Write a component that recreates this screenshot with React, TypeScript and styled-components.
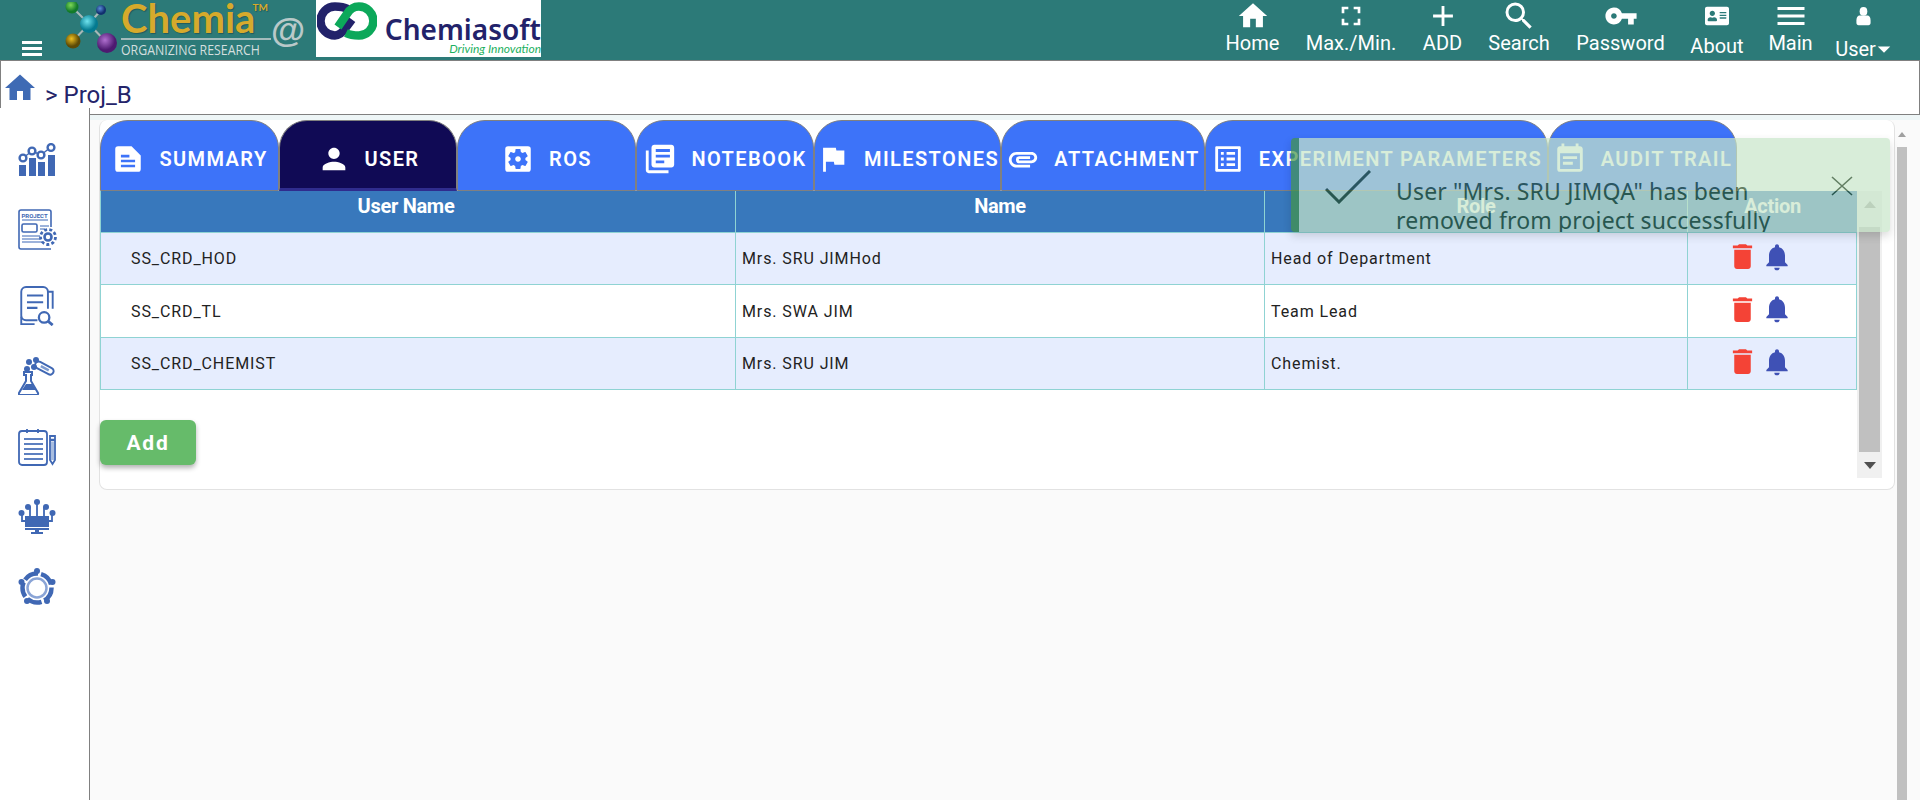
import React from 'react';
import styled, { createGlobalStyle } from 'styled-components';
import {
  MdHome, MdFullscreen, MdAdd, MdSearch, MdVpnKey, MdMenu, MdPerson,
  MdSettingsApplications, MdLibraryBooks, MdFlag, MdAttachment, MdListAlt, MdEventNote,
  MdDelete, MdNotifications, MdArrowDropDown,
} from 'react-icons/md';
import { FaAddressCard } from 'react-icons/fa';

const GlobalStyle = createGlobalStyle`
  html, body { margin: 0; height: 800px; overflow: hidden; background: #fafafa; }
  * { box-sizing: border-box; }
  body { font-family: Roboto, "Liberation Sans", sans-serif; }
`;

const SummaryGlyph = () => (
  <svg width="34" height="34" viewBox="0 0 24 24" fill="#fff" fillRule="evenodd">
    <path d="M14.500 3H5a2 2 0 0 0-2 2v14a2 2 0 0 0 2 2h14a2 2 0 0 0 2-2V9.500zM7 9h6v2H7zM7 12.500h10v1.800H7zM7 16h10v1.800H7z" />
  </svg>
);

const NAV = [
  { label: 'Home', icon: <MdHome size={34} />, width: 79 },
  { label: 'Max./Min.', icon: <MdFullscreen size={32} />, width: 118 },
  { label: 'ADD', icon: <MdAdd size={34} />, width: 65 },
  { label: 'Search', icon: <MdSearch size={36} />, width: 88 },
  { label: 'Password', icon: <MdVpnKey size={34} />, width: 115 },
  { label: 'About', icon: <FaAddressCard size={24} />, width: 78, low: true },
  { label: 'Main', icon: <MdMenu size={36} />, width: 69 },
];

const TABS = [
  { label: 'SUMMARY', icon: <SummaryGlyph />, width: 179 },
  { label: 'USER', icon: <MdPerson size={34} />, width: 178, active: true },
  { label: 'ROS', icon: <MdSettingsApplications size={34} />, width: 179 },
  { label: 'NOTEBOOK', icon: <MdLibraryBooks size={34} />, width: 178 },
  { label: 'MILESTONES', icon: <MdFlag size={34} />, width: 187 },
  { label: 'ATTACHMENT', icon: <MdAttachment size={34} />, width: 204 },
  { label: 'EXPERIMENT PARAMETERS', icon: <MdListAlt size={34} />, width: 343 },
  { label: 'AUDIT TRAIL', icon: <MdEventNote size={34} />, width: 189 },
];

const USERS = [
  { userName: 'SS_CRD_HOD', name: 'Mrs. SRU JIMHod', role: 'Head of Department', height: 52 },
  { userName: 'SS_CRD_TL', name: 'Mrs. SWA JIM', role: 'Team Lead', height: 53 },
  { userName: 'SS_CRD_CHEMIST', name: 'Mrs. SRU JIM', role: 'Chemist.', height: 53 },
];

const COLUMNS = '634px 529px 423px 1fr';

const BurgerGlyph = () => (
  <svg width="20" height="15" viewBox="0 0 20 15" fill="#fff">
    <rect y="0" width="20" height="3" />
    <rect y="6" width="20" height="3" />
    <rect y="12" width="20" height="3" />
  </svg>
);

const UserGlyph = () => (
  <svg width="15" height="20" viewBox="0 0 18 24" fill="#fff" preserveAspectRatio="none">
    <ellipse cx="9" cy="6.500" rx="4.600" ry="5.200" />
    <path d="M3.500 11.500h11c2 1 3 3 3 6v3c0 1.500-1 2.500-2.500 2.500H3c-1.500 0-2.500-1-2.500-2.500v-3c0-3 1-5 3-6z" />
  </svg>
);

const ChemiaMolecule = () => (
  <svg width="54" height="54" viewBox="0 0 54 54">
    <defs>
      <radialGradient id="mTeal" cx="40%" cy="35%"><stop offset="0%" stopColor="#6fe3ee" /><stop offset="100%" stopColor="#047a90" /></radialGradient>
      <radialGradient id="mGreen" cx="40%" cy="35%"><stop offset="0%" stopColor="#7ed957" /><stop offset="100%" stopColor="#127a2a" /></radialGradient>
      <radialGradient id="mBlue" cx="40%" cy="35%"><stop offset="0%" stopColor="#5a8fd8" /><stop offset="100%" stopColor="#12306f" /></radialGradient>
      <radialGradient id="mGold" cx="40%" cy="35%"><stop offset="0%" stopColor="#f0c020" /><stop offset="100%" stopColor="#5d4a05" /></radialGradient>
      <radialGradient id="mPurple" cx="40%" cy="35%"><stop offset="0%" stopColor="#b070d0" /><stop offset="100%" stopColor="#4d1a70" /></radialGradient>
    </defs>
    <g stroke="#a8b8b8" strokeWidth="2">
      <line x1="8" y1="5" x2="25" y2="22" />
      <line x1="37" y1="8" x2="25" y2="22" />
      <line x1="9" y1="39" x2="25" y2="22" />
      <line x1="43" y1="41" x2="25" y2="22" />
    </g>
    <circle cx="8" cy="5" r="6.500" fill="url(#mGreen)" />
    <circle cx="37" cy="8" r="5" fill="url(#mBlue)" />
    <circle cx="25" cy="22" r="9" fill="url(#mTeal)" />
    <circle cx="9" cy="39" r="7.500" fill="url(#mGold)" />
    <circle cx="43" cy="41" r="10" fill="url(#mPurple)" />
  </svg>
);

const ChainMark = () => (
  <svg width="60" height="38" viewBox="0 0 60 38" fill="none" strokeWidth="8.500">
    <path d="M31 7C27 5 23 4.500 18 4.500a14.500 14.500 0 1 0 0 29c6 0 9-5 11-8l6-8" stroke="#22226a" />
    <path d="M21 25l9-13c3-5 7-7.500 12-7.500a14.500 14.500 0 1 1 0 29c-5 0-9-.5-13-2.500" stroke="#0ca85a" />
  </svg>
);

const ChartIcon = () => (
  <svg width="38" height="33" viewBox="0 0 38 33" fill="#4068b4">
    <rect x="1" y="22" width="7" height="11" />
    <rect x="11" y="15" width="7" height="18" />
    <rect x="20" y="19" width="7" height="14" />
    <rect x="30" y="12" width="7" height="21" />
    <path d="M5 15L14 8l9 4 10-8" stroke="#4068b4" strokeWidth="1.500" fill="none" />
    <g fill="#fff" stroke="#4068b4" strokeWidth="2.400">
      <circle cx="5" cy="15" r="3.400" /><circle cx="14" cy="8" r="3.400" /><circle cx="23" cy="12" r="3.400" /><circle cx="33" cy="4.500" r="3.400" />
    </g>
  </svg>
);

const ProjectIcon = () => (
  <svg width="39" height="42" viewBox="0 0 39 42" fill="none" stroke="#4068b4">
    <path d="M33 18V3a2 2 0 0 0-2-2H3a2 2 0 0 0-2 2v35a2 2 0 0 0 2 2h30" strokeWidth="1.600" />
    <rect x="4" y="15" width="15" height="8" rx="1.500" strokeWidth="1.600" />
    <path d="M4 11h26M22 17h9M22 20h5M4 27h18M4 30h18M4 33h20" strokeWidth="1.600" stroke="#7d9bd0" />
    <text x="3.500" y="8.500" fontFamily="Roboto, sans-serif" fontSize="6" fontWeight="700" fill="#4068b4" stroke="none">PROJECT</text>
    <circle cx="30" cy="28" r="3.500" strokeWidth="2.600" />
    <circle cx="30" cy="28" r="7.500" strokeWidth="2.800" strokeDasharray="3 2.200" />
  </svg>
);

const SearchDocIcon = () => (
  <svg width="37" height="40" viewBox="0 0 38 42" fill="none" stroke="#4068b4" strokeWidth="2">
    <path d="M20 36H8a5 5 0 0 1-5-5V6a5 5 0 0 1 5-5h18a5 5 0 0 1 5 5v18" />
    <path d="M31 6h5v18M3 32v8h14" />
    <path d="M9 10h17M9 17h17M9 23h11" strokeWidth="2.200" />
    <circle cx="27" cy="33" r="5.500" strokeWidth="2.400" />
    <path d="M31 37l5 4" strokeWidth="3" />
  </svg>
);

const FlaskIcon = () => (
  <svg width="38" height="38" viewBox="0 0 38 38" fill="#4068b4">
    <path d="M6 15h8v3h-1v6l7 12c.4 1-.2 2-1 2H2c-1 0-1.400-1-1-2l7-12v-6H6z" fill="none" stroke="#4068b4" strokeWidth="2" />
    <path d="M4 33l4-6h6l4 6z" />
    <circle cx="11" cy="5" r="3" /><circle cx="18" cy="3" r="3" /><circle cx="9" cy="12" r="3" /><circle cx="16" cy="10" r="3" />
    <g transform="rotate(28 27 12)" fill="none" stroke="#4068b4" strokeWidth="2">
      <rect x="16" y="8" width="20" height="7" rx="3.500" />
      <path d="M22 11.500h9" strokeWidth="2.500" stroke="#7d9bd0" />
    </g>
  </svg>
);

const NotepadIcon = () => (
  <svg width="38" height="38" viewBox="0 0 38 38" fill="none" stroke="#4068b4" strokeWidth="1.800">
    <rect x="1" y="3" width="28" height="34" rx="3" />
    <path d="M9 1v4M20 1v4" />
    <path d="M6 11h19M6 16h19M6 21h19M6 26h19M6 31h19" strokeWidth="2" stroke="#5d80c0" />
    <path d="M32 8h5v24l-2.500 4-2.500-4z" />
    <path d="M32 12h5" strokeWidth="2.500" />
    <path d="M34.500 14v18" strokeWidth="3" stroke="#a8bde0" />
  </svg>
);

const NetworkIcon = () => (
  <svg width="38" height="36" viewBox="0 0 38 36" fill="#4068b4">
    <rect x="7" y="17" width="24" height="11" />
    <path d="M7 29h24v2H7zM17 31h4v2h4v2H13v-2h4z" />
    <g stroke="#4068b4" strokeWidth="1.800" fill="none">
      <path d="M19 17V4M12 17V9h-2v-1M26 17V9h2v-1M7 22H4v-6M31 22h3v-6" />
    </g>
    <circle cx="19" cy="3" r="3" /><circle cx="10" cy="8" r="3" /><circle cx="28" cy="8" r="3" /><circle cx="3.500" cy="14" r="3" /><circle cx="34.500" cy="14" r="3" />
  </svg>
);

const CircleNetIcon = () => (
  <svg width="38" height="38" viewBox="0 0 38 38">
    <circle cx="19" cy="20" r="14.500" fill="none" stroke="#4068b4" strokeWidth="4.500" strokeDasharray="15 3" />
    <circle cx="19" cy="20" r="9.500" fill="#fff" stroke="#8aa4d6" strokeWidth="2.500" />
    <g fill="#4068b4">
      <circle cx="19" cy="3" r="3" /><circle cx="34.500" cy="14" r="3" /><circle cx="29" cy="33" r="3" /><circle cx="9" cy="33" r="3" /><circle cx="3.500" cy="14" r="3" />
    </g>
  </svg>
);

const SIDE_ICONS = [
  { icon: <ChartIcon />, height: 33, gap: 33 },
  { icon: <ProjectIcon />, height: 42, gap: 35 },
  { icon: <SearchDocIcon />, height: 40, gap: 31 },
  { icon: <FlaskIcon />, height: 38, gap: 33 },
  { icon: <NotepadIcon />, height: 38, gap: 33 },
  { icon: <NetworkIcon />, height: 36, gap: 33 },
  { icon: <CircleNetIcon />, height: 38, gap: 0 },
];

const App = () => (
  <>
    <GlobalStyle />
    <Page>
      <Header>
        <Burger><BurgerGlyph /></Burger>
        <ChemiaLogo>
          <ChemiaMolecule />
          <ChemiaWords>
            <ChemiaName>Chemia<Tm>TM</Tm></ChemiaName>
            <ChemiaTag>ORGANIZING RESEARCH</ChemiaTag>
          </ChemiaWords>
          <AtSign>@</AtSign>
        </ChemiaLogo>
        <SoftLogo>
          <ChainMark />
          <SoftWords>
            <SoftName>Chemiasoft</SoftName>
            <SoftTag>Driving Innovation</SoftTag>
          </SoftWords>
        </SoftLogo>
        <Nav>
          {NAV.map((n) => (
            <NavItem key={n.label} $width={n.width}>
              <NavIcon>{n.icon}</NavIcon>
              <NavLabel $low={n.low}>{n.label}</NavLabel>
            </NavItem>
          ))}
          <NavItem $width={77}>
            <NavIcon><UserGlyph /></NavIcon>
            <NavLabel $low>User<Caret><MdArrowDropDown size={30} /></Caret></NavLabel>
          </NavItem>
        </Nav>
      </Header>

      <Crumb>
        <CrumbHome><MdHome size={36} /></CrumbHome>
        <CrumbText>&gt; Proj_B</CrumbText>
      </Crumb>

      <Body>
        <Sidebar>
          {SIDE_ICONS.map((s, i) => (
            <SideIcon key={i} $height={s.height} $gap={s.gap}>{s.icon}</SideIcon>
          ))}
        </Sidebar>

        <Main>
          <TopStrip />
          <Content>
            <Card>
              <CardInner>
                <Tabs>
                  {TABS.map((t) => (
                    <Tab key={t.label} $width={t.width} $active={t.active}>
                      {t.icon}
                      <TabLabel>{t.label}</TabLabel>
                    </Tab>
                  ))}
                </Tabs>
                <Table>
                  <HeadRow>
                    <HeadCell $shift={24}>User Name</HeadCell>
                    <HeadCell>Name</HeadCell>
                    <HeadCell>Role</HeadCell>
                    <HeadCell>Action</HeadCell>
                  </HeadRow>
                  {USERS.map((u, i) => (
                    <Row key={u.userName} $odd={i % 2 === 0} $height={u.height}>
                      <Cell $pad={30}>{u.userName}</Cell>
                      <Cell>{u.name}</Cell>
                      <Cell>{u.role}</Cell>
                      <ActionCell>
                        <MdDelete size={33} color="#f44336" />
                        <MdNotifications size={32} color="#3f51b5" />
                      </ActionCell>
                    </Row>
                  ))}
                </Table>
                <AddButton>Add</AddButton>
              </CardInner>
              <InnerScroll>
                <ArrowUp />
                <InnerThumb />
                <ArrowDown />
              </InnerScroll>
            </Card>
            <PageScroll>
              <PageArrow />
              <PageThumb />
            </PageScroll>
          </Content>
        </Main>
      </Body>

      <Toast>
        <CheckWrap>
          <svg width="46" height="34" viewBox="0 0 46 34" fill="none" stroke="#224a23" strokeWidth="3">
            <path d="M1 19l13 13L45 1" />
          </svg>
        </CheckWrap>
        <ToastText>User "Mrs. SRU JIMQA" has been removed from project successfully</ToastText>
        <ToastClose>
          <svg width="22" height="20" viewBox="0 0 22 20" fill="none" stroke="#224a23" strokeWidth="1.600">
            <path d="M1 1l20 18M21 1L1 19" />
          </svg>
        </ToastClose>
      </Toast>
    </Page>
  </>
);

const Page = styled.div`
  position: relative;
  width: 1920px;
  height: 800px;
  overflow: hidden;
  display: flex;
  flex-direction: column;
`;

const Header = styled.header`
  height: 60px;
  flex: none;
  background: #2c7a78;
  display: flex;
  align-items: flex-start;
`;

const Burger = styled.div`
  width: 64px;
  padding: 41px 0 0 22px;
  flex: none;
  svg { display: block; }
`;

const ChemiaLogo = styled.div`
  width: 252px;
  flex: none;
  padding-top: 2px;
  display: flex;
  color: #fff;
`;

const ChemiaWords = styled.div`
  width: 150px;
  margin-left: 3px;
  flex: none;
`;

const ChemiaName = styled.div`
  position: relative;
  font-family: Lato, sans-serif;
  font-weight: 700;
  font-size: 40px;
  line-height: 33px;
  color: #d6aa2c;
  text-shadow: 1px 1px 1px rgba(0, 0, 0, 0.25);
  border-bottom: 2px solid #a3bcbc;
  height: 38px;
`;

const Tm = styled.span`
  position: absolute;
  right: 3px;
  top: 0;
  font-size: 10px;
  line-height: 10px;
  font-weight: 700;
  color: #d6aa2c;
`;

const ChemiaTag = styled.div`
  font-family: "Open Sans", sans-serif;
  font-size: 14px;
  line-height: 15px;
  margin-top: 2px;
  color: #d3dfdf;
  white-space: nowrap;
  transform: scaleX(0.88);
  transform-origin: left;
`;

const AtSign = styled.div`
  font-family: "Liberation Sans", sans-serif;
  font-weight: 700;
  font-size: 35px;
  line-height: 35px;
  margin-top: 10px;
  color: #b9c9c9;
`;

const SoftLogo = styled.div`
  width: 225px;
  height: 57px;
  flex: none;
  background: #fff;
  display: flex;
  align-items: flex-start;
  padding: 2px 0 0 1px;
`;

const SoftWords = styled.div`
  margin-left: 8px;
  padding-top: 13px;
  display: flex;
  flex-direction: column;
  align-items: flex-end;
  flex: none;
`;

const SoftName = styled.div`
  font-family: "Noto Sans", sans-serif;
  font-weight: 600;
  font-size: 28px;
  line-height: 28px;
  color: #22226a;
`;

const SoftTag = styled.div`
  font-family: Lato, sans-serif;
  font-style: italic;
  font-size: 12px;
  line-height: 12px;
  color: #1cb060;
`;

const Nav = styled.nav`
  margin-left: auto;
  display: flex;
  padding-right: 18px;
`;

const NavItem = styled.div<{ $width: number }>`
  width: ${(p) => p.$width}px;
  display: flex;
  flex-direction: column;
  align-items: center;
  color: #fff;
`;

const NavIcon = styled.div`
  height: 31px;
  display: flex;
  align-items: center;
  justify-content: center;
`;

const NavLabel = styled.div<{ $low?: boolean }>`
  font-size: 20px;
  line-height: 24px;
  margin-top: ${(p) => (p.$low ? 3 : 0)}px;
  white-space: nowrap;
  display: flex;
  align-items: center;
`;

const Caret = styled.span`
  display: inline-flex;
  margin: 0 -7px 0 -7px;
`;

const Crumb = styled.div`
  height: 55px;
  flex: none;
  background: #fff;
  border: 1px solid #808080;
  display: flex;
  align-items: flex-start;
  padding: 9px 0 0 1px;
`;

const CrumbHome = styled.div`
  color: #3f6ab4;
  height: 36px;
`;

const CrumbText = styled.div`
  font-size: 24px;
  line-height: 26px;
  margin: 12px 0 0 7px;
  color: #24246a;
`;

const Body = styled.div`
  flex: 1;
  display: flex;
  min-height: 0;
`;

const Sidebar = styled.aside`
  width: 90px;
  flex: none;
  margin-top: -7px;
  padding: 35px 0 0 18px;
  background: #fff;
  border-right: 1px solid #808080;
  position: relative;
  z-index: 1;
  display: flex;
  flex-direction: column;
`;

const SideIcon = styled.div<{ $height: number; $gap: number }>`
  height: ${(p) => p.$height}px;
  margin-bottom: ${(p) => p.$gap}px;
  svg { display: block; }
`;

const Main = styled.main`
  flex: 1;
  min-width: 0;
  display: flex;
  flex-direction: column;
`;

const TopStrip = styled.div`
  height: 5px;
  background: #eef6f7;
  flex: none;
`;

const Content = styled.div`
  flex: 1;
  display: flex;
  align-items: flex-start;
  background: #fafafa;
  padding-left: 9px;
`;

const Card = styled.section`
  width: 1796px;
  height: 370px;
  flex: none;
  background: #fff;
  border: 1px solid #e2e2e2;
  border-top: none;
  border-radius: 8px;
  display: flex;
  align-items: flex-start;
`;

const CardInner = styled.div`
  width: 1757px;
  flex: none;
`;

const Tabs = styled.div`
  display: flex;
  height: 71px;
`;

const Tab = styled.div<{ $width: number; $active?: boolean }>`
  width: ${(p) => p.$width}px;
  flex: none;
  display: flex;
  align-items: center;
  justify-content: center;
  gap: 14px;
  padding-top: ${(p) => (p.$active ? 8 : 6)}px;
  color: #fff;
  background: ${(p) => (p.$active ? '#100a55' : '#3d73f9')};
  border: 1px solid #808080;
  border-bottom: ${(p) => (p.$active ? '3px solid #2f2c8e' : '1px solid #808080')};
  border-radius: 28px 28px 0 0;
  svg { flex: none; }
`;

const TabLabel = styled.span`
  font-size: 20px;
  font-weight: 600;
  letter-spacing: 1.400px;
  white-space: nowrap;
`;

const Table = styled.div`
  border-left: 1px solid #8fd3d3;
  width: 1757px;
`;

const HeadRow = styled.div`
  display: grid;
  grid-template-columns: ${COLUMNS};
  height: 41px;
  background: #3878bc;
`;

const HeadCell = styled.div<{ $shift?: number }>`
  color: #fff;
  font-size: 20px;
  font-weight: 700;
  letter-spacing: -0.3px;
  line-height: 30px;
  text-align: center;
  padding-right: ${(p) => p.$shift ?? 0}px;
  border-left: 1px solid #8fd3d3;
  &:first-child { border-left: none; }
`;

const Row = styled.div<{ $odd: boolean; $height: number }>`
  display: grid;
  grid-template-columns: ${COLUMNS};
  height: ${(p) => p.$height}px;
  background: ${(p) => (p.$odd ? '#e6edfe' : '#fff')};
  border-top: 1px solid #8fd3d3;
  border-right: 1px solid #8fd3d3;
  &:last-child { border-bottom: 1px solid #8fd3d3; }
`;

const Cell = styled.div<{ $pad?: number }>`
  font-size: 16px;
  letter-spacing: 0.9px;
  color: #222;
  display: flex;
  align-items: center;
  padding-left: ${(p) => p.$pad ?? 6}px;
  border-left: 1px solid #8fd3d3;
  &:first-child { border-left: none; }
`;

const ActionCell = styled(Cell)`
  padding-left: 38px;
  padding-bottom: 4px;
  gap: 2px;
  svg { flex: none; }
`;

const AddButton = styled.button`
  display: block;
  width: 96px;
  height: 45px;
  margin: 30px 0 0 0;
  border: none;
  border-radius: 6px;
  background: #66bb6a;
  color: #fff;
  font: 700 21px Roboto, sans-serif;
  letter-spacing: 1.800px;
  box-shadow: 0 3px 5px rgba(0, 0, 0, 0.3);
`;

const InnerScroll = styled.div`
  width: 25px;
  height: 287px;
  margin-top: 71px;
  flex: none;
  background: #f0f0f0;
  display: flex;
  flex-direction: column;
  align-items: center;
`;

const ArrowUp = styled.div`
  width: 0;
  height: 0;
  margin-top: 10px;
  border: 6px solid transparent;
  border-top: none;
  border-bottom: 7px solid #a0a0a0;
`;

const InnerThumb = styled.div`
  width: 21px;
  height: 225px;
  margin-top: 19px;
  background: #c0c0c0;
`;

const ArrowDown = styled.div`
  width: 0;
  height: 0;
  margin-top: 10px;
  border: 6px solid transparent;
  border-bottom: none;
  border-top: 7px solid #505050;
`;

const PageScroll = styled.div`
  width: 10px;
  margin-left: 2px;
  height: 680px;
  flex: none;
  display: flex;
  flex-direction: column;
  align-items: center;
`;

const PageArrow = styled.div`
  width: 0;
  height: 0;
  margin-top: 12px;
  border: 4px solid transparent;
  border-top: none;
  border-bottom: 5px solid #a0a0a0;
`;

const PageThumb = styled.div`
  width: 10px;
  flex: 1;
  margin-top: 10px;
  background: #c0c0c0;
`;

const Toast = styled.div`
  position: absolute;
  left: 1291px;
  top: 138px;
  width: 599px;
  height: 94px;
  z-index: 5;
  overflow: hidden;
  display: flex;
  align-items: flex-start;
  background: #c8e6c9;
  color: #224a23;
  border-left: 8px solid #439446;
  border-radius: 4px;
  opacity: 0.7;
  box-shadow: 0 4px 8px rgba(0, 0, 0, 0.2);
`;

const CheckWrap = styled.div`
  width: 97px;
  padding: 32px 0 0 26px;
  flex: none;
`;

const ToastText = styled.div`
  width: 420px;
  flex: none;
  font-family: "Noto Sans", sans-serif;
  font-size: 23px;
  letter-spacing: 0.15px;
  line-height: 29px;
  padding-top: 39px;
`;

const ToastClose = styled.div`
  margin: 38px 0 0 15px;
  flex: none;
`;

export default App;
